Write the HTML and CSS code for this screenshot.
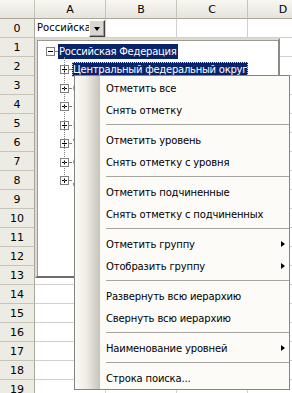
FILE: index.html
```html
<!DOCTYPE html>
<html>
<head>
    <title>Иерархия</title>
    <link rel="stylesheet" href="styles.css">
</head>
<body>
    <div class="sheet">
        <div class="grid">
            <div class="corner"></div>
            <div class="col-head">A</div>
            <div class="col-head">B</div>
            <div class="col-head">C</div>
            <div class="col-head">D</div>

            <div class="row-head">0</div>
            <div class="cell combo">
                <span class="combo-value">Российская Федерация</span>
                <span class="combo-button"><span class="combo-arrow"></span></span>
            </div>
            <div class="cell"></div><div class="cell"></div><div class="cell"></div>

            <div class="row-head">1</div><div class="cell"></div><div class="cell"></div><div class="cell"></div><div class="cell"></div>
            <div class="row-head">2</div><div class="cell"></div><div class="cell"></div><div class="cell"></div><div class="cell"></div>
            <div class="row-head">3</div><div class="cell"></div><div class="cell"></div><div class="cell"></div><div class="cell"></div>
            <div class="row-head">4</div><div class="cell"></div><div class="cell"></div><div class="cell"></div><div class="cell"></div>
            <div class="row-head">5</div><div class="cell"></div><div class="cell"></div><div class="cell"></div><div class="cell"></div>
            <div class="row-head">6</div><div class="cell"></div><div class="cell"></div><div class="cell"></div><div class="cell"></div>
            <div class="row-head">7</div><div class="cell"></div><div class="cell"></div><div class="cell"></div><div class="cell"></div>
            <div class="row-head">8</div><div class="cell"></div><div class="cell"></div><div class="cell"></div><div class="cell"></div>
            <div class="row-head">9</div><div class="cell"></div><div class="cell"></div><div class="cell"></div><div class="cell"></div>
            <div class="row-head">10</div><div class="cell"></div><div class="cell"></div><div class="cell"></div><div class="cell"></div>
            <div class="row-head">11</div><div class="cell"></div><div class="cell"></div><div class="cell"></div><div class="cell"></div>
            <div class="row-head">12</div><div class="cell"></div><div class="cell"></div><div class="cell"></div><div class="cell"></div>
            <div class="row-head">13</div><div class="cell"></div><div class="cell"></div><div class="cell"></div><div class="cell"></div>
            <div class="row-head">14</div><div class="cell"></div><div class="cell"></div><div class="cell"></div><div class="cell"></div>
            <div class="row-head">15</div><div class="cell"></div><div class="cell"></div><div class="cell"></div><div class="cell"></div>
            <div class="row-head">16</div><div class="cell"></div><div class="cell"></div><div class="cell"></div><div class="cell"></div>
            <div class="row-head">17</div><div class="cell"></div><div class="cell"></div><div class="cell"></div><div class="cell"></div>
            <div class="row-head">18</div><div class="cell"></div><div class="cell"></div><div class="cell"></div><div class="cell"></div>
            <div class="row-head">19</div><div class="cell"></div><div class="cell"></div><div class="cell"></div><div class="cell"></div>
        </div>

        <!-- dropdown of the combo in A0 -->
        <div class="tree-popup">
            <div class="tree-row root-row">
                <svg class="expander" width="9" height="9" viewBox="0 0 9 9"><rect x="0.5" y="0.5" width="8" height="8" fill="#fff" stroke="#808080"/><path d="M2 4.5h5" stroke="#000"/></svg>
                <span class="connector"></span>
                <span class="tree-label selected">Российская Федерация</span>
            </div>
            <div class="tree-children">
                <div class="tree-row">
                    <svg class="expander" width="9" height="9" viewBox="0 0 9 9"><rect x="0.5" y="0.5" width="8" height="8" fill="#fff" stroke="#808080"/><path d="M2 4.5h5M4.5 2v5" stroke="#000"/></svg>
                    <span class="connector"></span>
                    <span class="tree-label selected focused">Центральный федеральный округ</span>
                </div>
                <div class="tree-row">
                    <svg class="expander" width="9" height="9" viewBox="0 0 9 9"><rect x="0.5" y="0.5" width="8" height="8" fill="#fff" stroke="#808080"/><path d="M2 4.5h5M4.5 2v5" stroke="#000"/></svg>
                    <span class="connector"></span>
                    <span class="tree-label">Северо-Западный федеральный округ</span>
                </div>
                <div class="tree-row">
                    <svg class="expander" width="9" height="9" viewBox="0 0 9 9"><rect x="0.5" y="0.5" width="8" height="8" fill="#fff" stroke="#808080"/><path d="M2 4.5h5M4.5 2v5" stroke="#000"/></svg>
                    <span class="connector"></span>
                    <span class="tree-label">Южный федеральный округ</span>
                </div>
                <div class="tree-row">
                    <svg class="expander" width="9" height="9" viewBox="0 0 9 9"><rect x="0.5" y="0.5" width="8" height="8" fill="#fff" stroke="#808080"/><path d="M2 4.5h5M4.5 2v5" stroke="#000"/></svg>
                    <span class="connector"></span>
                    <span class="tree-label">Приволжский федеральный округ</span>
                </div>
                <div class="tree-row">
                    <svg class="expander" width="9" height="9" viewBox="0 0 9 9"><rect x="0.5" y="0.5" width="8" height="8" fill="#fff" stroke="#808080"/><path d="M2 4.5h5M4.5 2v5" stroke="#000"/></svg>
                    <span class="connector"></span>
                    <span class="tree-label">Уральский федеральный округ</span>
                </div>
                <div class="tree-row">
                    <svg class="expander" width="9" height="9" viewBox="0 0 9 9"><rect x="0.5" y="0.5" width="8" height="8" fill="#fff" stroke="#808080"/><path d="M2 4.5h5M4.5 2v5" stroke="#000"/></svg>
                    <span class="connector"></span>
                    <span class="tree-label">Сибирский федеральный округ</span>
                </div>
                <div class="tree-row">
                    <svg class="expander" width="9" height="9" viewBox="0 0 9 9"><rect x="0.5" y="0.5" width="8" height="8" fill="#fff" stroke="#808080"/><path d="M2 4.5h5M4.5 2v5" stroke="#000"/></svg>
                    <span class="connector"></span>
                    <span class="tree-label">Дальневосточный федеральный округ</span>
                </div>
            </div>
        </div>

        <!-- context menu of the tree -->
        <div class="context-menu">
            <div class="menu-item">Отметить все</div>
            <div class="menu-item">Снять отметку</div>
            <div class="menu-separator"></div>
            <div class="menu-item">Отметить уровень</div>
            <div class="menu-item">Снять отметку с уровня</div>
            <div class="menu-separator"></div>
            <div class="menu-item">Отметить подчиненные</div>
            <div class="menu-item">Снять отметку с подчиненных</div>
            <div class="menu-separator"></div>
            <div class="menu-item">Отметить группу<span class="submenu-arrow"></span></div>
            <div class="menu-item">Отобразить группу<span class="submenu-arrow"></span></div>
            <div class="menu-separator"></div>
            <div class="menu-item">Развернуть всю иерархию</div>
            <div class="menu-item">Свернуть всю иерархию</div>
            <div class="menu-separator"></div>
            <div class="menu-item">Наименование уровней<span class="submenu-arrow"></span></div>
            <div class="menu-separator"></div>
            <div class="menu-item">Строка поиска...</div>
        </div>
    </div>
</body>
</html>
```

FILE: styles.css
```css
* {
    margin: 0;
    padding: 0;
    box-sizing: border-box;
}

body {
    font-family: 'DejaVu Sans', sans-serif;
    font-size: 10px;
    color: #000;
    background: #fff;
    overflow: hidden;
}

.sheet {
    position: relative;
    width: 292px;
    height: 393px;
    overflow: hidden;
}

/* Spreadsheet grid */
.grid {
    display: grid;
    grid-template-columns: 35px repeat(4, 71px);
    grid-auto-rows: 19px;
}

.corner,
.col-head {
    background: linear-gradient(#f8f7f3, #e6e4dc);
    border-right: 1px solid #c6c3b8;
    border-bottom: 1px solid #a9a69a;
}

.col-head {
    display: flex;
    align-items: center;
    justify-content: center;
    font-size: 11px;
}

.row-head {
    display: flex;
    align-items: center;
    justify-content: center;
    background: #ecebe4;
    border-right: 1px solid #a9a69a;
    border-bottom: 1px solid #c6c3b8;
    font-size: 11px;
}

.cell {
    background: #fff;
    border-right: 1px solid #d0d0d0;
    border-bottom: 1px solid #d0d0d0;
}

/* Combo in cell A0 */
.combo {
    display: flex;
    align-items: flex-start;
    padding-left: 2px;
    overflow: hidden;
}

.combo-value {
    flex: 1;
    overflow: hidden;
    white-space: nowrap;
    line-height: 18px;
}

.combo-button {
    flex: none;
    width: 16px;
    height: 17px;
    margin-top: 1px;
    display: flex;
    align-items: center;
    justify-content: center;
    background: #d9d7d0;
    border: 1px solid;
    border-color: #fff #404040 #404040 #fff;
    box-shadow: inset -1px -1px 0 #9a988f;
}

.combo-arrow {
    width: 0;
    height: 0;
    border-left: 3.5px solid transparent;
    border-right: 3.5px solid transparent;
    border-top: 4px solid #000;
}

/* Tree dropdown */
.tree-popup {
    position: absolute;
    left: 35px;
    top: 38px;
    width: 245px;
    height: 240px;
    background: #fff;
    border: 2px solid;
    border-color: #dedbd2 #8c8a84 #6f6d68 #dedbd2;
    box-shadow: inset 1px 1px 0 #9c9a94;
    padding: 2px 0 0 9px;
    overflow: hidden;
}

.tree-row {
    display: flex;
    align-items: center;
    height: 18.5px;
    white-space: nowrap;
}

.expander {
    flex: none;
    display: block;
}

.connector {
    flex: none;
    width: 2px;
    margin: 0 1px 0 0;
    border-top: 1px dotted #808080;
}

.tree-label {
    padding: 1px 1px;
    line-height: 13px;
    letter-spacing: -0.25px;
}

.selected {
    background: #0a246a;
    color: #fff;
}

.focused {
    outline: 1px dotted #d0d0d0;
    outline-offset: -1px;
}

.tree-children {
    position: relative;
    margin-left: 14px;
}

.tree-children::before {
    content: "";
    position: absolute;
    left: 4px;
    top: -4px;
    bottom: 9px;
    border-left: 1px dotted #808080;
}

/* Context menu */
.context-menu {
    position: absolute;
    left: 74px;
    top: 75px;
    width: 216px;
    height: 315px;
    padding-top: 1px;
    border: 1px solid #858585;
    background:
        linear-gradient(to right, #fbfaf7 0%, #efede6 45%, #c6c3ba 100%) 0 0 / 25px 100% no-repeat,
        #fcfbf8;
}

.menu-item {
    display: flex;
    align-items: center;
    height: 22px;
    padding: 0 4px 0 31px;
    white-space: nowrap;
    letter-spacing: -0.15px;
}

.menu-separator {
    height: 8px;
    margin-left: 31px;
    padding-top: 3px;
}

.menu-separator::after {
    content: "";
    display: block;
    border-top: 1px solid #a6a5a0;
}

.submenu-arrow {
    margin-left: auto;
    width: 0;
    height: 0;
    border-top: 3.5px solid transparent;
    border-bottom: 3.5px solid transparent;
    border-left: 4px solid #000;
}
```
